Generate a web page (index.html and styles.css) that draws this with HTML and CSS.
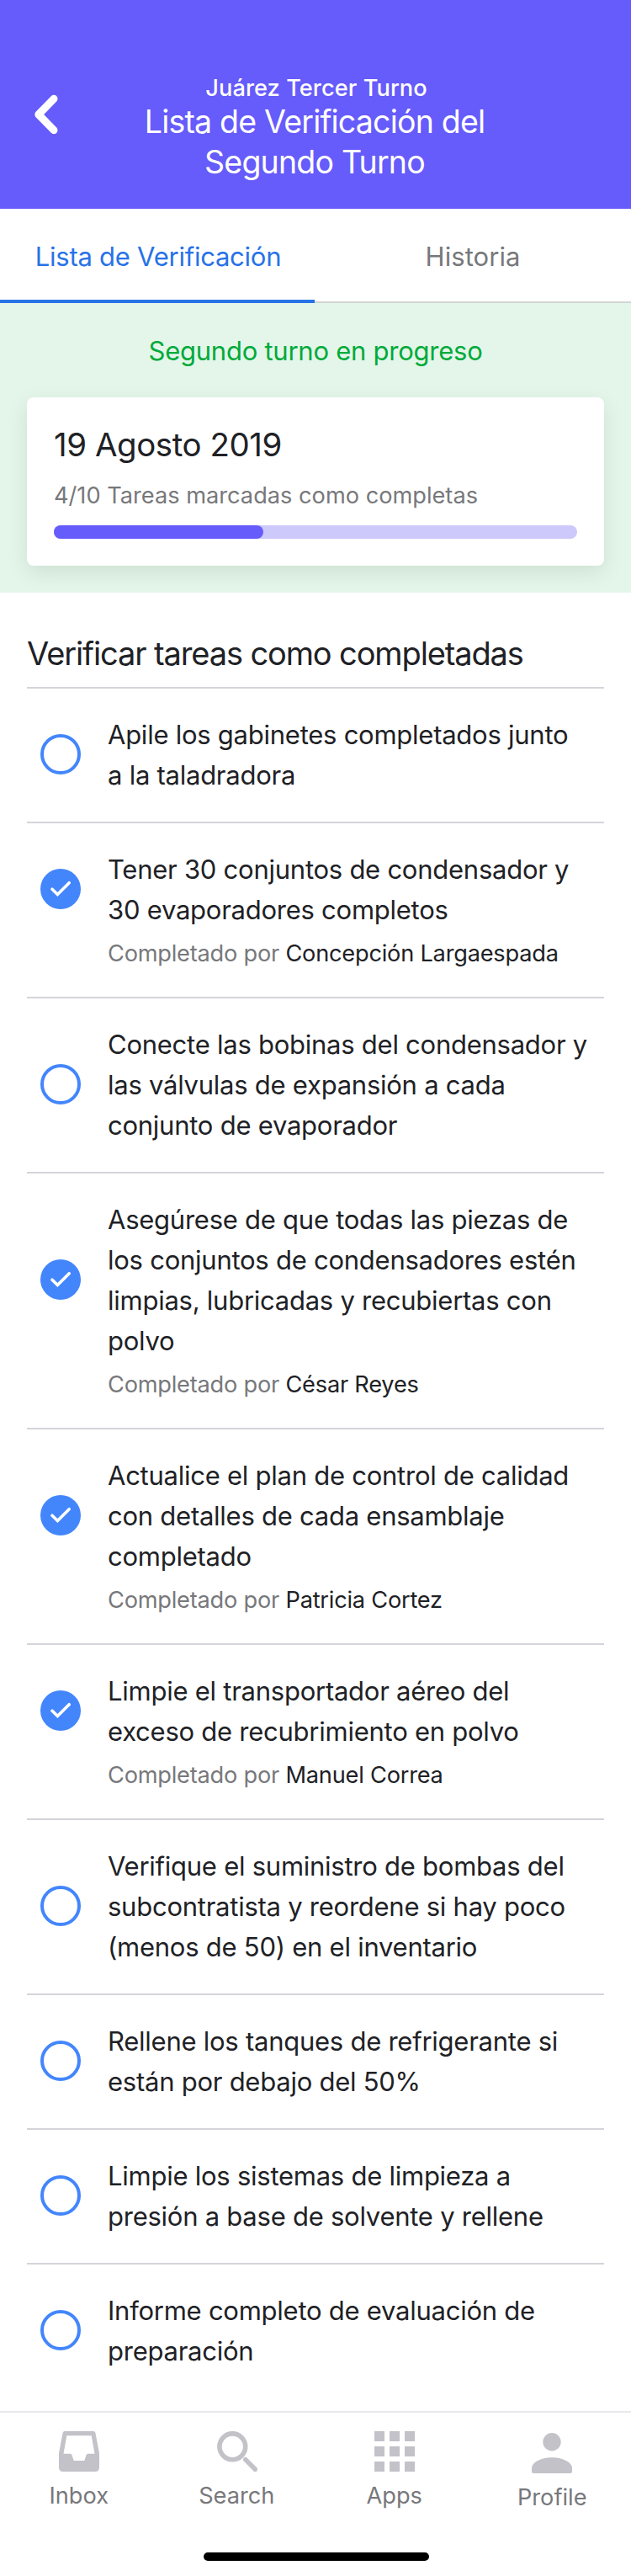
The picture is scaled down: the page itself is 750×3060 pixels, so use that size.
FILE: index.html
```html
<!DOCTYPE html>
<html lang="es">
<head>
<meta charset="utf-8">
<title>Lista de Verificación</title>
<link rel="stylesheet" href="styles.css">
</head>
<body>
<svg class="sprite" aria-hidden="true">
  <symbol id="check" viewBox="0 0 48 48"><path d="M14 24.2l6.4 6.3 13.8-13.8" fill="none" stroke="#fff" stroke-width="3.6" stroke-linecap="round" stroke-linejoin="miter"/></symbol>
</svg>
<header class="header">
  <svg class="back" viewBox="0 0 48 56"><path d="M36 9.3L17.8 28 36 46.7" fill="none" stroke="#fff" stroke-width="9" stroke-linecap="round" stroke-linejoin="round"/></svg>
  <div class="header-text">
    <p class="subtitle">Juárez Tercer Turno</p>
    <h1 class="title">Lista de Verificación del<br>Segundo Turno</h1>
  </div>
</header>
<nav class="tabs">
  <a class="tab tab-active">Lista de Verificación</a>
  <a class="tab">Historia</a>
</nav>
<section class="status">
  <p class="status-label">Segundo turno en progreso</p>
  <div class="card">
    <h2 class="date">19 Agosto 2019</h2>
    <p class="count">4/10 Tareas marcadas como completas</p>
    <div class="progress"><div class="progress-fill" style="width:40%"></div></div>
  </div>
</section>
<main class="tasks">
  <h2 class="heading">Verificar tareas como completadas</h2>
  <ul class="list">
    <li class="task"><span class="circle"></span><p class="text">Apile los gabinetes completados junto<br>a la taladradora</p></li>
    <li class="task"><svg class="circle done"><use href="#check"/></svg><p class="text">Tener 30 conjuntos de condensador y<br>30 evaporadores completos</p><p class="by">Completado por <span class="name">Concepción Largaespada</span></p></li>
    <li class="task"><span class="circle"></span><p class="text">Conecte las bobinas del condensador y<br>las válvulas de expansión a cada<br>conjunto de evaporador</p></li>
    <li class="task"><svg class="circle done"><use href="#check"/></svg><p class="text">Asegúrese de que todas las piezas de<br>los conjuntos de condensadores estén<br>limpias, lubricadas y recubiertas con<br>polvo</p><p class="by">Completado por <span class="name">César Reyes</span></p></li>
    <li class="task"><svg class="circle done"><use href="#check"/></svg><p class="text">Actualice el plan de control de calidad<br>con detalles de cada ensamblaje<br>completado</p><p class="by">Completado por <span class="name">Patricia Cortez</span></p></li>
    <li class="task"><svg class="circle done"><use href="#check"/></svg><p class="text">Limpie el transportador aéreo del<br>exceso de recubrimiento en polvo</p><p class="by">Completado por <span class="name">Manuel Correa</span></p></li>
    <li class="task"><span class="circle"></span><p class="text">Verifique el suministro de bombas del<br>subcontratista y reordene si hay poco<br>(menos de 50) en el inventario</p></li>
    <li class="task"><span class="circle"></span><p class="text">Rellene los tanques de refrigerante si<br>están por debajo del 50%</p></li>
    <li class="task"><span class="circle"></span><p class="text">Limpie los sistemas de limpieza a<br>presión a base de solvente y rellene</p></li>
    <li class="task"><span class="circle"></span><p class="text">Informe completo de evaluación de<br>preparación</p></li>
  </ul>
</main>
<footer class="footer">
  <nav class="bar">
    <a class="item">
      <svg class="icon" viewBox="0 0 48 48"><path fill-rule="evenodd" d="M7 0h34q2 0 2.4 2L48 26v17q0 5-5 5H5q-5 0-5-5V26L4.600 2Q5 0 7 0zM9.300 5.200L5.500 26.800h8q1.500 0 2 1.500l2 6.200q.3.500 1 .500h11q.7 0 1-.5l2-6.200q.5-1.500 2-1.500h8L38.700 5.200z"/></svg>
      <span class="label">Inbox</span>
    </a>
    <a class="item">
      <svg class="icon icon-search" viewBox="0 0 48 48"><circle cx="18.300" cy="18.300" r="15.400"/><path d="M33.800 33.800L45.300 45.300"/></svg>
      <span class="label">Search</span>
    </a>
    <a class="item">
      <svg class="icon" viewBox="0 0 48 48"><path d="M0 0h12v12H0zM18 0h12v12H18zM36 0h12v12H36zM0 18h12v12H0zM18 18h12v12H18zM36 18h12v12H36zM0 36h12v12H0zM18 36h12v12H18zM36 36h12v12H36z"/></svg>
      <span class="label">Apps</span>
    </a>
    <a class="item item-profile">
      <svg class="icon" viewBox="0 0 48 48"><circle cx="24" cy="10.700" r="10.700"/><path d="M0 42c0-7 11-12.700 24-12.700S48 35 48 42v4q0 2-2 2H2q-2 0-2-2z"/></svg>
      <span class="label">Profile</span>
    </a>
  </nav>
  <div class="home"></div>
</footer>
</body>
</html>
```
FILE: styles.css
```css
* { box-sizing: border-box; }
body {
  margin: 0;
  background: #fff;
  color: #202125;
  font: 400 31px/48px Inter, "Liberation Sans", sans-serif;
  letter-spacing: -0.25px;
}
h1, h2, p, ul { margin: 0; padding: 0; font-weight: 400; }
.sprite { position: absolute; width: 0; height: 0; }

.header {
  display: grid;
  grid-template-columns: 124px 1fr 124px;
  height: 248px;
  padding-top: 89px;
  background: #665bfb;
  color: #fff;
}
.back { width: 48px; height: 56px; margin: 19px 0 0 28px; }
.header-text { text-align: center; white-space: nowrap; }
.subtitle { font-size: 27.2px; font-weight: 500; line-height: 32px; letter-spacing: 0.07px; padding-left: 2px; }
.title { font-size: 37.5px; line-height: 48px; letter-spacing: -0.8px; padding-right: 2px; }

.tabs { display: grid; grid-template-columns: 374px 376px; height: 112px; }
.tab {
  padding-top: 33px;
  border-bottom: 2px solid #d3d4d5;
  color: #77787b;
  text-align: center;
  letter-spacing: 0.05px;
}
.tab-active { border-bottom: 4px solid #2872e8; color: #2872e8; letter-spacing: -0.25px; padding-left: 2px; }

.status { padding: 33px 32px 32px; background: #e4f6ea; }
.status-label { color: #00aa3a; text-align: center; }
.card {
  margin-top: 31px;
  padding: 32px;
  background: #fff;
  border-radius: 8px;
  box-shadow: 0 8px 24px rgba(0, 40, 10, 0.1);
}
.date { font-size: 38.4px; letter-spacing: -0.4px; }
.count { margin: 16px 0; padding-top: 1px; height: 40px; color: #77787b; font-size: 27.2px; line-height: 40px; letter-spacing: 0; }
.progress { height: 16px; border-radius: 8px; background: #cec9fb; }
.progress-fill { height: 16px; border-radius: 8px; background: #665bfb; }

.tasks { padding: 48px 32px 16px; }
.heading { padding-bottom: 16px; font-size: 38px; height: 64px; letter-spacing: -1.12px; white-space: nowrap; }
.list { list-style: none; }
.task {
  display: grid;
  grid-template-columns: 48px 1fr;
  column-gap: 32px;
  align-items: center;
  padding: 30px 0 32px 16px;
  border-top: 2px solid #d4d4db;
  white-space: nowrap;
}
.circle { width: 48px; height: 48px; border: 4px solid #4386fc; border-radius: 50%; }
.done { border: 0; background: #4386fc; }
.text { padding-top: 1px; margin-bottom: -1px; }
.by { grid-column: 2; margin-top: 8px; padding-top: 1px; height: 40px; color: #77787b; font-size: 27.2px; line-height: 40px; letter-spacing: -0.22px; }
.name { color: #202125; }

.footer { height: 196px; border-top: 2px solid #e9e9ed; }
.bar { display: grid; grid-template-columns: repeat(4, 1fr); height: 166px; padding-top: 22px; }
.item { display: flex; flex-direction: column; align-items: center; gap: 13px; }
.item-profile { padding-top: 2px; }
.icon { width: 48px; height: 48px; fill: #c3c2c8; }
.icon-search { fill: none; stroke: #c3c2c8; stroke-width: 5.6; stroke-linecap: round; margin-left: 2px; }
.label { color: #77787b; font-size: 27.2px; line-height: 32px; letter-spacing: 0; }
.home { width: 268px; height: 10px; margin: 0 0 0 242px; border-radius: 5px; background: #000; }
```
